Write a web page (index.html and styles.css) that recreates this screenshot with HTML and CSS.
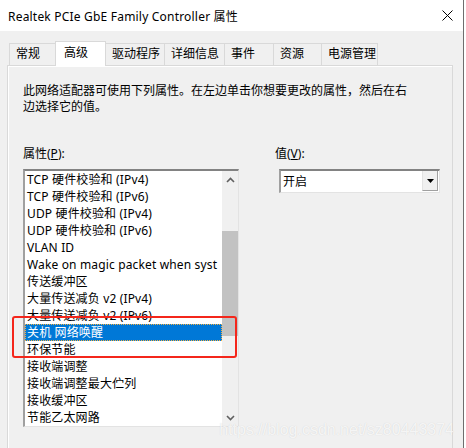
FILE: index.html
```html
<!DOCTYPE html>
<html lang="zh-CN">

<head>
    <meta charset="utf-8">
    <meta name="viewport" content="width=device-width, initial-scale=1.0">
    <title>Realtek PCIe GbE Family Controller 属性</title>

    <!--   styles -->
    <link rel="stylesheet" href="styles.css">
</head>

<body>
    <div class="window">
        <header class="titlebar">
            <span class="title">Realtek PCIe GbE Family Controller 属性</span>
            <svg class="close" width="11" height="11" viewBox="0 0 11 11">
                <path d="M0.5 0.5 L10.5 10.5 M10.5 0.5 L0.5 10.5" stroke="#000" stroke-width="1" fill="none"/>
            </svg>
        </header>

        <nav class="tabs">
            <div class="tab t-46">常规</div>
            <div class="tab active">高级</div>
            <div class="tab t-58">驱动程序</div>
            <div class="tab t-60">详细信息</div>
            <div class="tab t-49">事件</div>
            <div class="tab t-48">资源</div>
            <div class="tab t-57 last">电源管理</div>
        </nav>

        <main class="panel">
            <p class="intro">此网络适配器可使用下列属性。在左边单击你想要更改的属性，然后在右<br>边选择它的值。</p>

            <div class="columns">
                <section class="col-left">
                    <div class="label">属性(<u>P</u>):</div>
                    <div class="listbox">
                        <ul class="items">
                            <li>TCP 硬件校验和 (IPv4)</li>
                            <li>TCP 硬件校验和 (IPv6)</li>
                            <li>UDP 硬件校验和 (IPv4)</li>
                            <li>UDP 硬件校验和 (IPv6)</li>
                            <li>VLAN ID</li>
                            <li>Wake on magic packet when syst</li>
                            <li>传送缓冲区</li>
                            <li>大量传送减负 v2 (IPv4)</li>
                            <li>大量传送减负 v2 (IPv6)</li>
                            <li class="selected">关机 网络唤醒</li>
                            <li>环保节能</li>
                            <li>接收端调整</li>
                            <li>接收端调整最大伫列</li>
                            <li>接收缓冲区</li>
                            <li>节能乙太网路</li>
                        </ul>
                        <div class="scrollbar">
                            <div class="arrow">
                                <svg width="9" height="6" viewBox="0 0 9 6">
                                    <path d="M1 5 L4.5 1.5 L8 5" stroke="#606060" stroke-width="1.6" fill="none"/>
                                </svg>
                            </div>
                            <div class="track">
                                <div class="thumb"></div>
                            </div>
                            <div class="arrow">
                                <svg width="9" height="6" viewBox="0 0 9 6">
                                    <path d="M1 1 L4.5 4.5 L8 1" stroke="#606060" stroke-width="1.6" fill="none"/>
                                </svg>
                            </div>
                        </div>
                    </div>
                </section>

                <section class="col-right">
                    <div class="label">值(<u>V</u>):</div>
                    <div class="select">
                        <span class="select-value">开启</span>
                        <span class="select-btn">
                            <svg width="7" height="4" viewBox="0 0 7 4"><path d="M0 0 H7 L3.5 4 Z" fill="#000"/></svg>
                        </span>
                    </div>
                </section>
            </div>
        </main>

        <!-- annotation + watermark lie over the dialog -->
        <div class="mark"></div>
        <div class="watermark">https://blog.csdn.net/sz80443374</div>
    </div>
</body>

</html>
```

FILE: styles.css
```css
body {
    margin: 0;
    background-color: #fff;
    font-family: "Noto Sans", "Noto Sans CJK SC", sans-serif;
    font-size: 12px;
    color: #000;
}

.window {
    position: relative;
    width: 463px;
    height: 448px;
    background-color: #f0f0f0;
    border-right: 1px solid #6e6e6e;
    overflow: hidden;
}

.titlebar {
    height: 31px;
    background-color: #fff;
    display: flex;
    align-items: center;
    justify-content: space-between;
    padding: 0 10px 0 8px;
}

.title {
    font-size: 12px;
    letter-spacing: 0.2px;
}

/* tabs */

.tabs {
    display: flex;
    align-items: flex-end;
    height: 25px;
    margin: 9px 0 0 9px;
    position: relative;
    z-index: 1;
}

.tab {
    box-sizing: border-box;
    height: 22px;
    line-height: 20px;
    padding-left: 6px;
    border: 1px solid #d9d9d9;
    border-right: none;
    border-bottom: none;
    background-color: #f0f0f0;
    white-space: nowrap;
}

.t-46 { width: 46px; }
.t-48 { width: 48px; }
.t-49 { width: 49px; }
.t-57 { width: 57px; }
.t-58 { width: 58px; }
.t-60 { width: 60px; }

.tab.last {
    border-right: 1px solid #d9d9d9;
}

.tab.active {
    width: 51px;
    height: 25px;
    padding-left: 8px;
    line-height: 22px;
    background-color: #fff;
    border-right: 1px solid #d9d9d9;
    margin-bottom: -1px;
}

.tab.active + .tab {
    border-left: none;
}

/* panel */

.panel {
    margin-left: 7px;
    width: 446px;
    height: 400px;
    box-sizing: border-box;
    border: 1px solid #d9d9d9;
    box-shadow: inset 1px 1px 0 #fff;
    padding: 17px 15px 0 15px;
}

.intro {
    margin: 0;
    line-height: 16px;
}

.columns {
    display: flex;
    margin-top: 31px;
}

.label {
    line-height: 16px;
    height: 16px;
    margin-bottom: 7px;
}

.col-left {
    width: 216px;
}

.col-right {
    margin-left: 36px;
}

/* list box */

.listbox {
    display: flex;
    width: 216px;
    height: 258px;
    box-sizing: border-box;
    border-top: 2px solid #828282;
    border-left: 2px solid #a0a0a0;
    border-right: 1px solid #e3e3e3;
    border-bottom: 1px solid #e3e3e3;
    background-color: #fff;
}

.items {
    list-style: none;
    margin: 0;
    padding: 0;
    flex: 1;
    overflow: hidden;
}

.items li {
    height: 17px;
    line-height: 17px;
    padding-left: 2px;
    white-space: nowrap;
    overflow: hidden;
    letter-spacing: 0.15px;
}

.items li.selected {
    background-color: #0078d7;
    color: #fff;
    outline: 1px dotted #f5b041;
    outline-offset: -1px;
}

.scrollbar {
    width: 16px;
    display: flex;
    flex-direction: column;
    background-color: #f0f0f0;
}

.arrow {
    height: 17px;
    display: flex;
    align-items: center;
    justify-content: center;
}

.track {
    flex: 1;
}

.thumb {
    margin-top: 43px;
    height: 105px;
    background-color: #c2c2c2;
}

/* select */

.select {
    display: flex;
    margin-left: 4px;
    width: 161px;
    height: 24px;
    box-sizing: border-box;
    border-top: 2px solid #828282;
    border-left: 2px solid #a0a0a0;
    border-right: 1px solid #e3e3e3;
    border-bottom: 1px solid #e3e3e3;
    background-color: #fff;
}

.select-value {
    flex: 1;
    line-height: 21px;
    padding-left: 2px;
}

.select-btn {
    width: 16px;
    margin: 0 1px 1px 0;
    box-sizing: border-box;
    background-color: #f0f0f0;
    border-left: 1px solid #e3e3e3;
    border-bottom: 1px solid #a0a0a0;
    border-right: 1px solid #a0a0a0;
    display: flex;
    align-items: center;
    justify-content: center;
}

/* overlays */

.mark {
    position: absolute;
    left: 12px;
    top: 316px;
    width: 221px;
    height: 38px;
    border: 2.5px solid #f4261b;
    border-radius: 3px;
}

.watermark {
    position: absolute;
    right: 9px;
    top: 421px;
    font-family: "Liberation Sans", Arial, sans-serif;
    font-size: 16px;
    color: rgba(255, 255, 255, 0.8);
    text-shadow: 0 0 1px rgba(0, 0, 0, 0.15);
}
```
